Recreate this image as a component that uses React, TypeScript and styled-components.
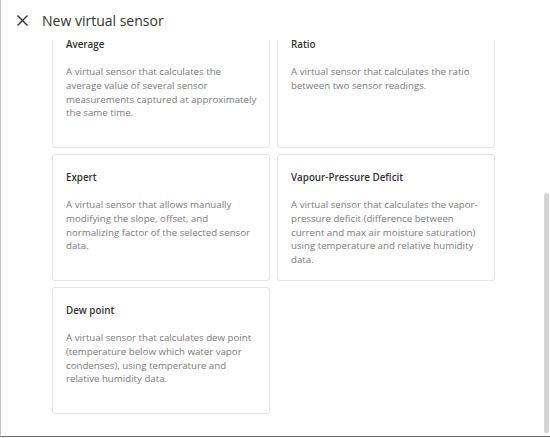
import React, { useLayoutEffect, useRef } from "react";
import styled, { createGlobalStyle } from "styled-components";

const Global = createGlobalStyle`
  html, body { margin: 0; padding: 0; background: #fff; }
  body { font-family: "Open Sans", "Noto Sans", sans-serif; }
  * { box-sizing: border-box; }
`;

const Frame = styled.div`
  position: relative;
  width: 550px;
  height: 437px;
  border-left: 1px solid #c4c4c4;
  border-bottom: 1px solid #6a6a6a;
  display: flex;
  flex-direction: column;
  background: #fff;
  overflow: hidden;
`;

const Header = styled.div`
  height: 40px;
  flex: none;
  display: flex;
  align-items: center;
  padding-left: 16px;
  gap: 14px;
`;

const CloseButton = styled.button`
  border: none;
  background: none;
  padding: 0;
  width: 11px;
  height: 12px;
  display: flex;
  align-items: center;
  justify-content: center;
  color: #333;
  cursor: pointer;
`;

const Title = styled.h1`
  margin: 0;
  font-size: 14px;
  font-weight: 400;
  color: #333;
`;

const ScrollArea = styled.div`
  flex: 1;
  overflow: hidden;
`;

const Content = styled.div`
  padding: 16px 0 22px 51px;
`;

const Grid = styled.div`
  display: grid;
  grid-template-columns: 218px 218px;
  grid-auto-rows: 127px;
  gap: 6px 7px;
`;

const Card = styled.div`
  border: 1px solid #e5e5e5;
  border-radius: 3px;
  padding: 16px 10px 14px 13px;
  background: #fff;
`;

const CardTitle = styled.div`
  font-size: 9.8px;
  font-weight: 600;
  color: #333;
  line-height: 13px;
  margin-bottom: 14px;
`;

const CardText = styled.p`
  margin: 0;
  font-size: 9.7px;
  line-height: 13.8px;
  color: #7a7a7a;
`;

const Thumb = styled.div`
  position: absolute;
  left: 543px;
  top: 193px;
  width: 5px;
  height: 240px;
  background: #d4d4d4;
  border-radius: 3px;
`;

const items = [
  {
    title: "Average",
    text: "A virtual sensor that calculates the average value of several sensor measurements captured at approximately the same time.",
  },
  {
    title: "Ratio",
    text: "A virtual sensor that calculates the ratio between two sensor readings.",
  },
  {
    title: "Expert",
    text: "A virtual sensor that allows manually modifying the slope, offset, and normalizing factor of the selected sensor data.",
  },
  {
    title: "Vapour-Pressure Deficit",
    text: "A virtual sensor that calculates the vapor-pressure deficit (difference between current and max air moisture saturation) using temperature and relative humidity data.",
  },
  {
    title: "Dew point",
    text: "A virtual sensor that calculates dew point (temperature below which water vapor condenses), using temperature and relative humidity data.",
  },
];

export default function App() {
  const ref = useRef<HTMLDivElement>(null);
  useLayoutEffect(() => {
    if (ref.current) ref.current.scrollTop = ref.current.scrollHeight;
  }, []);
  return (
    <>
      <Global />
      <Frame>
        <Header>
          <CloseButton aria-label="Close">
            <svg width="11" height="11" viewBox="0 0 11 11">
              <path d="M1 1L10 10M10 1L1 10" stroke="#333" strokeWidth="1.4" strokeLinecap="square" />
            </svg>
          </CloseButton>
          <Title>New virtual sensor</Title>
        </Header>
        <ScrollArea ref={ref}>
          <Content>
            <Grid>
              {items.map((it) => (
                <Card key={it.title}>
                  <CardTitle>{it.title}</CardTitle>
                  <CardText>{it.text}</CardText>
                </Card>
              ))}
            </Grid>
          </Content>
        </ScrollArea>
        <Thumb />
      </Frame>
    </>
  );
}
